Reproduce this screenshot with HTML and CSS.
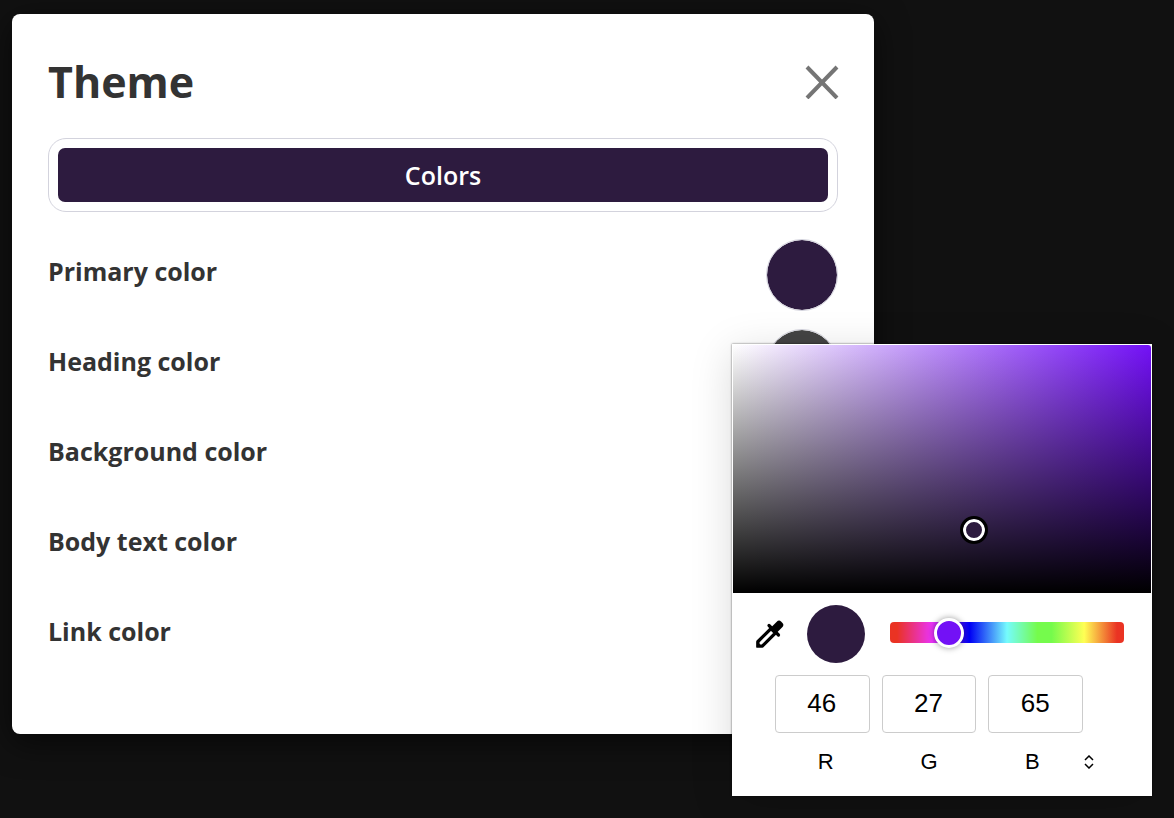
FILE: index.html
```html
<!DOCTYPE html>
<html lang="en">
<head>
<meta charset="utf-8">
<meta name="viewport" content="width=device-width, initial-scale=1">
<title>Theme</title>
<link rel="stylesheet" href="styles.css">
</head>
<body>
<main class="panel">
  <header class="panel-header">
    <h1 class="panel-title">Theme</h1>
    <button class="close" type="button" aria-label="Close">
      <svg width="34" height="34" viewBox="0 0 34 34" fill="none" stroke="#757575" stroke-width="4"><path d="M2 2 32 33M32 2 2 33"/></svg>
    </button>
  </header>
  <div class="tabs" role="tablist">
    <button class="tab" type="button" role="tab" aria-selected="true">Colors</button>
  </div>
  <div class="rows">
    <div class="row"><label for="primary">Primary color</label><input class="swatch" id="primary" type="color" value="#2d1b3f"></div>
    <div class="row"><label for="heading">Heading color</label><input class="swatch" id="heading" type="color" value="#444444"></div>
    <div class="row"><label for="background">Background color</label><input class="swatch" id="background" type="color" value="#ffffff"></div>
    <div class="row"><label for="bodytext">Body text color</label><input class="swatch" id="bodytext" type="color" value="#333333"></div>
    <div class="row"><label for="link">Link color</label><input class="swatch" id="link" type="color" value="#2d1b3f"></div>
  </div>

  <section class="picker" aria-label="Color picker">
    <div class="area"><span class="handle"></span></div>
    <div class="tools">
      <button class="dropper" type="button" aria-label="Pick a color from the screen">
        <svg width="28" height="28" viewBox="0 0 28 28"><path d="M2 21.500 15 8.500l4.500 4.500-13 13H2z" fill="none" stroke="#000" stroke-width="3.200"/><path d="M.4 21 7 27.600H.4z"/><path d="M13 5.500l9.500 9.500" fill="none" stroke="#000" stroke-width="3.200" stroke-linecap="round"/><path d="M15 7.500 20.500 2q2.500-2.500 4.500-.5l1.500 1.500q2 2-.5 4.500L20.500 13z"/></svg>
      </button>
      <span class="current"></span>
      <input class="hue" type="range" min="0" max="360" value="77" aria-label="Hue">
    </div>
    <div class="values">
      <input id="red" type="text" inputmode="numeric" value="46">
      <input id="green" type="text" inputmode="numeric" value="27">
      <input id="blue" type="text" inputmode="numeric" value="65">
    </div>
    <div class="names">
      <label for="red">R</label>
      <label for="green">G</label>
      <label for="blue">B</label>
      <button class="format" type="button" aria-label="Change color format">
        <svg width="10" height="14" viewBox="0 0 10 14" fill="none" stroke="#000" stroke-width="1.500"><path d="M1 5 5 1l4 4M1 9l4 4 4-4"/></svg>
      </button>
    </div>
  </section>
</main>
</body>
</html>
```
FILE: styles.css
```css
* {
  box-sizing: border-box;
}

body {
  margin: 0;
  padding: 14px 300px 84px 12px;
  background: #111;
  color: #333;
  font-family: "Open Sans", "Noto Sans", sans-serif;
}

button {
  display: flex;
  align-items: center;
  justify-content: center;
  margin: 0;
  padding: 0;
  border: 0;
  background: none;
  cursor: pointer;
}

.panel {
  position: relative;
  padding: 38px 36px 63px;
  border-radius: 8px;
  background: #fff;
  box-shadow: 0 8px 32px rgba(0, 0, 0, 0.6);
}

.panel-header {
  display: flex;
  align-items: center;
  justify-content: space-between;
  margin-bottom: 26px;
}

.panel-title {
  margin: 0;
  font-size: 43px;
  font-weight: 700;
  line-height: 60px;
}

.close {
  margin-right: -1px;
}

.tabs {
  padding: 9px;
  border: 1px solid #d3d3dd;
  border-radius: 18px;
}

.tab {
  width: 100%;
  height: 54px;
  border-radius: 7px;
  background: #2d1b3f;
  color: #fff;
  font: 600 25px "Open Sans", "Noto Sans", sans-serif;
}

.rows {
  display: grid;
  gap: 18px;
  margin-top: 27px;
}

.row {
  display: flex;
  justify-content: space-between;
}

.row label {
  font-size: 25px;
  font-weight: 700;
  line-height: 64px;
}

.swatch {
  width: 72px;
  height: 72px;
  padding: 0;
  border: 1px solid #d3d3dd;
  border-radius: 50%;
  background: none;
  appearance: none;
}

.swatch::-webkit-color-swatch-wrapper {
  padding: 0;
}

.swatch::-webkit-color-swatch {
  border: 0;
  border-radius: 50%;
}

.picker {
  position: absolute;
  top: 330px;
  right: -278px;
  width: 420px;
  padding: 1px 1px 18px;
  background: #fff;
  color: #000;
  font-family: "Liberation Sans", Arial, sans-serif;
  box-shadow: 0 0 2px rgba(0, 0, 0, 0.6), 0 8px 40px rgba(0, 0, 0, 0.15);
}

.area {
  position: relative;
  height: 248px;
  border-top-right-radius: 3px;
  background:
    linear-gradient(to top, #000, transparent),
    linear-gradient(to right, #fff, #7311f6);
}

.handle {
  position: absolute;
  top: 74%;
  left: 58%;
  width: 28px;
  height: 28px;
  margin: -13px -15px;
  border: 3px solid #000;
  border-radius: 50%;
  background: #2d1b3f;
  box-shadow: inset 0 0 0 3px #fff;
}

.tools {
  display: flex;
  align-items: center;
  padding: 12px 27px 12px 23px;
}

.current {
  width: 58px;
  height: 58px;
  margin: 0 25px 0 23px;
  border-radius: 50%;
  background: #2d1b3f;
}

.hue {
  flex: 1;
  min-width: 0;
  height: 21px;
  margin: 0 0 3px;
  border-radius: 4px;
  background: linear-gradient(to right, #ea3323 3%, #ea33f7 18%, #0000f5 34%, #75fbfd 50%, #75fb4c 63%, #75fb4c 69%, #ffff54 83%, #ea3323 97%);
  appearance: none;
}

.hue::-webkit-slider-thumb {
  width: 30px;
  height: 30px;
  border: 3px solid #fff;
  border-radius: 50%;
  background: #7311f6;
  box-shadow: 0 0 6px rgba(0, 0, 0, 0.4);
  appearance: none;
}

.values {
  display: grid;
  grid-template-columns: repeat(3, 1fr);
  gap: 12px;
  padding: 0 68px 0 42px;
}

.values input {
  width: 100%;
  min-width: 0;
  height: 58px;
  padding: 0 1px 2px 0;
  border: 1px solid #ccc;
  border-radius: 4px;
  background: #fff;
  color: #000;
  font: 26px "Liberation Sans", Arial, sans-serif;
  text-align: center;
}

.names {
  display: grid;
  grid-template-columns: repeat(3, 1fr) 10px;
  margin-top: 14px;
  padding: 0 57px 1px 41px;
  font-size: 22px;
  line-height: 30px;
  text-align: center;
}
```
